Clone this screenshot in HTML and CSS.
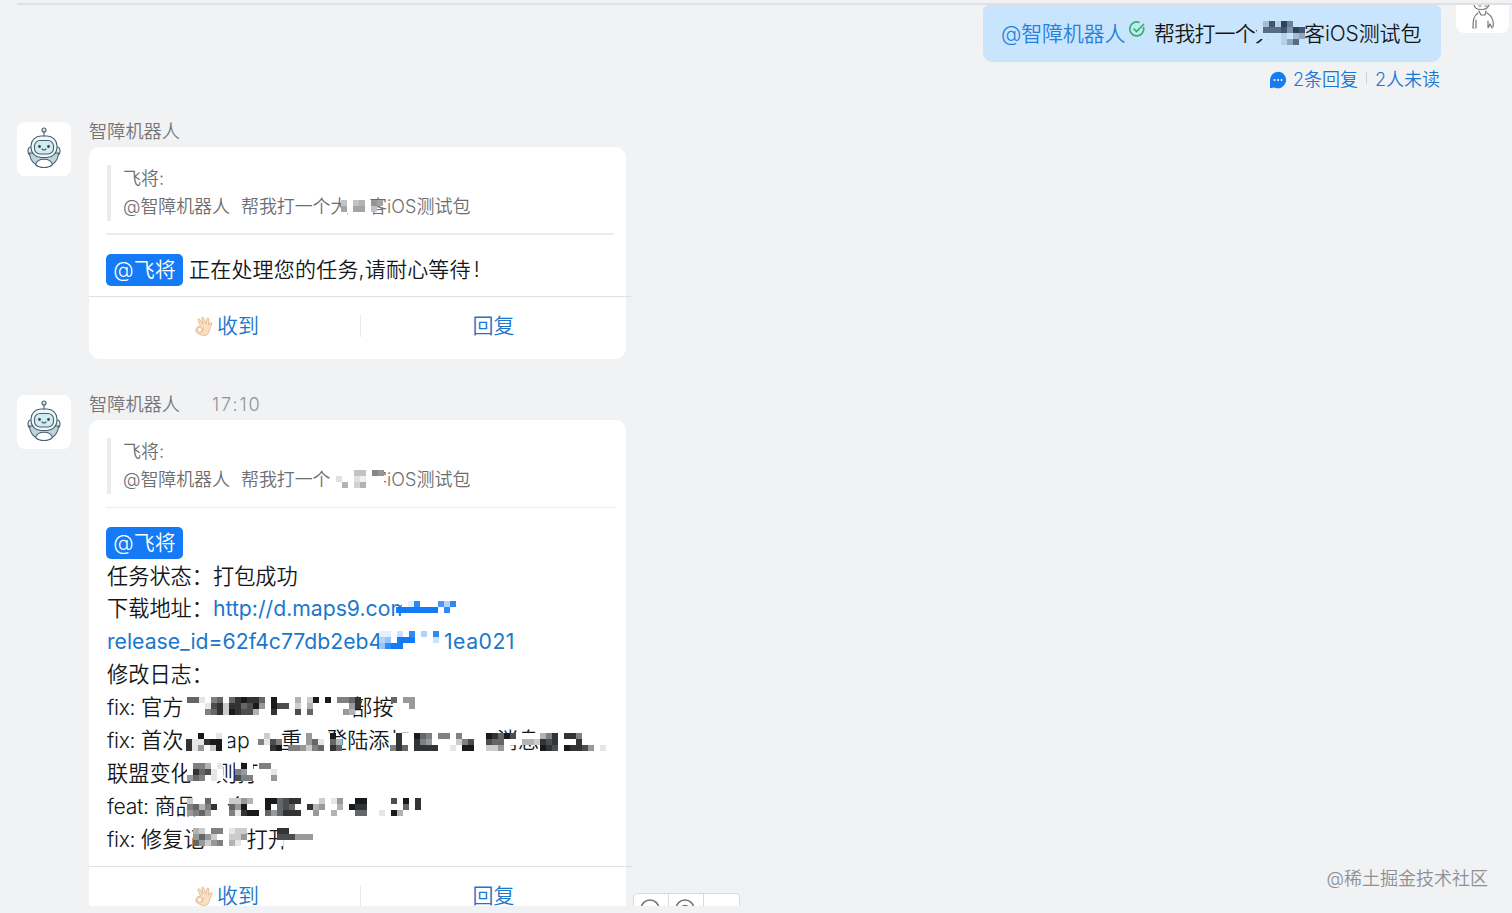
FILE: index.html
```html
<!DOCTYPE html>
<html lang="zh-CN">
<head>
<meta charset="utf-8">
<title>智障机器人</title>
<link rel="stylesheet" href="styles.css">
</head>
<body>
<svg width="0" height="0" class="defs">
  <symbol id="robot" viewBox="0 0 54 54">
    <g fill="#fff" stroke="#48616c" stroke-width="1.1" stroke-linecap="round">
      <path d="M14 25c-4 0-4 8 0 8M40 25c4 0 4 8 0 8" fill="#dcebef"/>
      <path d="M12.500 31c1 18.500 28 18.500 29 0z" fill="#bdd5dc"/>
      <path d="M18.500 42.500c2-7 15-7 17 0c-4 4-13 4-17 0z"/>
      <rect x="14" y="14" width="26" height="21.500" rx="10" fill="#eef8fa"/>
      <rect x="17.500" y="18.500" width="19" height="13.500" rx="5.500" fill="#d0ebf2"/>
      <path d="M27 10v4" fill="none"/><circle cx="27" cy="8" r="2" fill="#dcebef"/>
      <path d="M25 27q2 2 4 0" fill="none"/>
    </g>
    <circle cx="22.500" cy="24.500" r="1.400" fill="#314955"/><circle cx="31.500" cy="24.500" r="1.400" fill="#314955"/>
  </symbol>
  <symbol id="ok" viewBox="0 0 18 20">
    <g fill="#fbdfc2" stroke="#d9ad80" stroke-width=".7" stroke-linejoin="round">
      <path d="M5.500 10L2.800 3.500q.8-1.800 2 0L8 8L6.600 1.800q1-1.500 2 0L11 7.500L12 2.500q1.300-1.200 1.900.4L13.500 9L15.500 6.500q1.600-.3 1.200 1.300L14.500 14q-.6 4.800-4.500 5.500q-3.500.2-6-1.500Q.6 17 .6 13.600Q2 10 5.500 10z"/>
      <circle cx="4.800" cy="13.800" r="2.300" fill="#fff"/>
      <path d="M8.500 11.500q-.5 4-3.500 6" fill="none"/>
    </g>
  </symbol>
</svg>

<main class="chat">
  <div class="topline"></div>
  <section class="outgoing">
    <div class="sent">
      <div class="bubble"><span class="at">@智障机器人</span><svg class="read" viewBox="0 0 18 18"><path d="M15.500 7a7 7 0 1 1-4-4.500M5.500 8.500l3 3L16 4" fill="none" stroke="#2db55d" stroke-width="1.700"/></svg><span class="ask">帮我打一个大</span><span class="tail">客iOS测试包</span>
        <svg class="mosaic m-top" data-ink="#1c2f45" data-bg="#c9e5fd" data-rows="w27185..|w6667487|wwww1w23|..ww136."></svg>
      </div>
      <div class="status"><svg viewBox="0 0 18 18"><path d="M9 .8a8.200 8.200 0 1 1-3.600 15.600L1 17.200V9A8.200 8.200 0 0 1 9 .8z" fill="#187bf0"/><g fill="#fff"><circle cx="5.500" cy="9" r="1"/><circle cx="9" cy="9" r="1"/><circle cx="12.500" cy="9" r="1"/></g></svg><span>2条回复</span><i></i><span>2人未读</span></div>
    </div>
    <div class="me"><svg viewBox="0 0 53 28"><g fill="none" stroke="#777" stroke-width="1.200" stroke-linecap="round"><path d="M18 0c1 6 13 6 15 0M23 1h2M29 1h2M23 6l2 4h4l1-4M22 8c-5 3-5 9-5 15M31 8c5 3 7 8 6 14M20 15v8M17 23h1M32 16v7l2-4 2 4"/></g></svg></div>
  </section>

  <section class="msg first">
    <div class="avatar"><svg><use href="#robot"/></svg></div>
    <div class="content">
      <div class="name">智障机器人</div>
      <div class="card">
        <div class="quote"><div>飞将:</div><div class="line"><span class="q">@智障机器人</span><span class="q2">帮我打一个大</span><span class="q3">客iOS测试包</span>
          <svg class="mosaic m-q1" data-ink="#777777" data-bg="#ffffff" data-rows="4w45w76|6w66w4.|w.ww..."></svg></div></div>
        <div class="reply"><b>@飞将</b><span>正在处理您的任务,请耐心等待<em>!</em></span></div>
        <div class="actions"><a><svg><use href="#ok"/></svg>收到</a><a>回复</a></div>
      </div>
    </div>
  </section>

  <section class="msg second">
    <div class="avatar"><svg><use href="#robot"/></svg></div>
    <div class="content">
      <div class="name">智障机器人<time>17:10</time></div>
      <div class="card">
        <div class="quote"><div>飞将:</div><div class="line"><span class="q">@智障机器人</span><span class="q2">帮我打一个</span><span class="q3">客iOS测试包</span>
          <svg class="mosaic m-q2" data-ink="#777777" data-bg="#ffffff" data-rows="...44w87|2..21www|.5.35www"></svg></div></div>
        <div class="reply"><b>@飞将</b></div>
        <div class="log">
          <div class="line">任务状态：打包成功</div>
          <div class="line">下载地址：<span class="url">http://d.maps9.com</span>
            <svg class="mosaic m-u1" data-ink="#157af5" data-bg="#ffffff" data-rows="..w18...738|.9999999.8.|..ww......."></svg></div>
          <div class="line"><span class="url id">release_id=62f4c77db2eb4</span><span class="url end">1ea021</span>
            <svg class="mosaic m-u2" data-ink="#157af5" data-bg="#ffffff" data-rows="11.2.8.3.8|34.999...2|4899......"></svg></div>
          <div class="line">修改日志：</div>
          <div class="line"><span class="lat">fix: </span>官方<span class="bu">部按</span>
            <svg class="mosaic m-log" data-ink="#181a1c" data-bg="#ffffff" data-rows="661.56.689886.9...3.29.9.5568.....6.44|...1782886794.977.2.3......48........4|...568298773..8...7.6.....43"></svg></div>
          <div class="line"><span class="lat">fix: </span>首次<span class="ap">ap</span><span class="zhong">重</span><span class="deng">登陆添加</span><span class="xiao">消息</span>
            <svg class="mosaic m-log low" data-ink="#181a1c" data-bg="#ffffff" data-rows="..9..1w......2......4..w9.........w8ww965.55.5....98697wwww358.885|811899w.....5175....461w63........w8ww854....257..766www332878...8|814w29w.......89.554256w86........586w8888..1.99..224w.....987.98874.1"></svg></div>
          <div class="line">联盟变化<span class="ze">则打</span>
            <svg class="mosaic m-log" data-ink="#181a1c" data-bg="#ffffff" data-rows="w553w1..w9w.55|w8671w..54ww..1|465.1w..755w..4"></svg></div>
          <div class="line"><span class="lat">feat: </span>商品<span class="ge">个</span>
            <svg class="mosaic m-log mid" data-ink="#181a1c" data-bg="#ffffff" data-rows="2w.6...2243..996788...2.14..99....7.9.8|56358..649w..9.676..834..3.988......6.8|4564...51899.646888..4..3...66..1.93"></svg></div>
          <div class="line"><span class="lat">fix: </span>修复记<span class="kai">打开</span>
            <svg class="mosaic m-log5" data-ink="#181a1c" data-bg="#ffffff" data-rows="32.55.122.....88....|4642..224.....777444|64245.31......w....."></svg></div>
        </div>
        <div class="actions"><a><svg><use href="#ok"/></svg>收到</a><a>回复</a></div>
      </div>
    </div>
    <div class="tools"><i><svg viewBox="0 0 22 12"><circle cx="11" cy="12" r="9"/></svg></i><i><svg viewBox="0 0 22 12"><circle cx="11" cy="12" r="9"/><path d="M7 10q4-3 8 0"/></svg></i><i></i></div>
  </section>
  <div class="bottom"></div>
  <div class="watermark">@稀土掘金技术社区</div>
</main>
<script src="mosaic.js"></script>
</body>
</html>
```
FILE: styles.css
```css
* { box-sizing: border-box; }
body {
  margin: 0;
  background: #f0f2f4;
  font-family: Inter, "Noto Sans CJK SC", sans-serif;
  font-weight: 350;
  color: #151719;
}
.defs { position: absolute; }
.chat { position: relative; width: 1512px; height: 913px; overflow: hidden; }
.topline { height: 5px; margin-left: 17px; border-bottom: 2px solid #dfe1e4; }

.outgoing { display: flex; justify-content: flex-end; height: 117px; padding-right: 3px; }
.sent { width: 458px; }
.bubble {
  position: relative;
  display: flex;
  height: 57px;
  padding-left: 18px;
  border-radius: 6px 6px 9px 9px;
  background: #c9e5fd;
  font-size: 21px;
  line-height: 57px;
  white-space: nowrap;
}
.at { width: 127px; color: #2581dd; letter-spacing: -.2px; }
.read { width: 18px; height: 18px; margin-top: 15px; }
.ask { width: 150px; margin-left: 8px; letter-spacing: -.8px; }
.tail { letter-spacing: -.1px; }
.status {
  display: flex;
  align-items: center;
  justify-content: flex-end;
  height: 32px;
  padding-right: 1px;
  color: #1b77d4;
  font-size: 18px;
}
.status svg { width: 18px; height: 18px; margin: 3px 6px 0 0; }
.status i { width: 1px; height: 12px; margin: 0 8px; background: #cfd3d7; }
.me { width: 53px; height: 28px; margin-left: 15px; border-radius: 0 0 8px 8px; background: #fff; }
.me svg { display: block; width: 53px; height: 28px; }

.msg { position: relative; display: flex; padding-left: 17px; }
.first { height: 273px; }
.second { height: 512px; }
.avatar { width: 54px; height: 54px; margin-right: 18px; border-radius: 8px; background: #fff; }
.avatar svg { display: block; width: 54px; height: 54px; }
.content { width: 537px; }
.name { height: 25px; color: #737577; font-size: 18.200px; line-height: 19px; }
.name time { margin-left: 32px; color: #929496; letter-spacing: 1.900px; }
.card { width: 537px; border-radius: 11px; background: #fff; padding-top: 18px; }
.first .card { height: 212px; }
.second .card { height: 500px; }
.quote {
  height: 56px;
  margin-left: 18px;
  padding-left: 12px;
  border-left: 4px solid #ebecec;
  color: #6c6e70;
  font-size: 18px;
}
.quote > div:first-child { height: 28px; line-height: 27px; }
.line { position: relative; display: flex; white-space: nowrap; }
.quote .line { line-height: 28px; }
.q { width: 118px; letter-spacing: -.1px; }
.q2 { width: 128px; letter-spacing: -.1px; }
.q3 { letter-spacing: .05px; }
.reply {
  display: flex;
  margin: 12px 12px 0 17px;
  padding-top: 19px;
  border-top: 2px solid #ebecee;
  font-size: 21px;
  line-height: 31px;
}
.second .reply { border-top-width: 1px; margin: 13px 10px 0 17px; }
.reply b {
  width: 77px;
  height: 32px;
  margin-right: 6px;
  border-radius: 5px;
  background: #157af5;
  color: #fff;
  font-weight: 350;
  text-align: center;
}
.reply span { letter-spacing: .2px; }
.reply em { margin-left: 3px; font-style: normal; }
.actions {
  display: grid;
  grid-template-columns: 272px 271px;
  width: 543px;
  margin-top: 10px;
  padding-top: 18px;
  border-top: 1px solid #dfe1e3;
  color: #1b77cb;
  font-size: 21px;
  line-height: 22px;
}
.actions a { display: flex; justify-content: center; height: 22px; }
.actions a:first-child { border-right: 1px solid #e8e9ea; padding-left: 5px; }
.actions a:last-child { padding-right: 6px; }
.actions svg { width: 18px; height: 20px; margin: 1px 4px 0 0; }
.log { height: 297px; margin: .5px 0 0 18px; font-size: 21.200px; line-height: 32.900px; }
.log .line { height: 32.900px; }
.url { color: #1b77cb; font-weight: 380; }
.id { width: 337px; }
.end { letter-spacing: .5px; }
.lat { white-space: pre; letter-spacing: -.3px; }
.bu { margin-left: 168px; }
.ap { margin-left: 42px; }
.zhong { margin-left: 31px; }
.deng { margin-left: 24px; }
.xiao { margin-left: 86px; }
.ze { margin-left: 24px; }
.ge { margin-left: 30px; }
.kai { margin-left: 42px; }
.second .log + .actions { margin-top: 9.500px; }

.mosaic { position: absolute; height: 24px; overflow: visible; }
.m-top { left: 274px; top: 16px; }
.m-q1 { left: 218px; top: 7px; }
.m-q2 { left: 213px; top: 4px; }
.m-u1 { left: 283px; top: 9px; }
.m-u2 { left: 272px; top: 6px; }
.m-log { left: 80px; top: 6px; }
.m-log.low { left: 79px; top: 9px; }
.m-log.mid { top: 8px; }
.m-log5 { left: 86px; top: 5px; }

.tools {
  position: absolute;
  left: 633px;
  top: 498px;
  display: flex;
  width: 107px;
  height: 15px;
  border: 1px solid #d9dbdd;
  border-radius: 4px 4px 0 0;
  background: #fff;
}
.tools i { width: 35px; padding: 3px 0 0 5px; border-right: 1px solid #d9dbdd; }
.tools i:last-child { border: 0; }
.tools svg { display: block; width: 22px; height: 12px; fill: none; stroke: #6f7174; stroke-width: 1.500; }
.bottom { position: absolute; left: 0; right: 0; bottom: 0; height: 7px; background: #f0f2f4; }
.watermark { position: absolute; right: 24px; bottom: 20px; color: #8d8f92; font-size: 18px; line-height: 28px; }
```
FILE: mosaic.js
```js
// Paints redaction blocks. Digits are ink strength, "w" is plain background.
const CELL = 6;
const rgb = (hex) => [1, 3, 5].map((i) => parseInt(hex.slice(i, i + 2), 16));
document.querySelectorAll('.mosaic').forEach((svg) => {
  const ink = rgb(svg.dataset.ink);
  const bg = rgb(svg.dataset.bg);
  const rows = svg.dataset.rows.split('|');
  svg.setAttribute('width', Math.max(...rows.map((r) => r.length)) * CELL);
  rows.forEach((row, y) => [...row].forEach((ch, x) => {
    if (ch === '.') return;
    const t = ch === 'w' ? 0 : Number(ch) / 9;
    const rect = document.createElementNS('http://www.w3.org/2000/svg', 'rect');
    rect.setAttribute('x', x * CELL);
    rect.setAttribute('y', y * CELL);
    rect.setAttribute('width', CELL);
    rect.setAttribute('height', CELL);
    rect.setAttribute('fill', `rgb(${bg.map((b, i) => Math.round(b + (ink[i] - b) * t))})`);
    svg.append(rect);
  }));
});
```
